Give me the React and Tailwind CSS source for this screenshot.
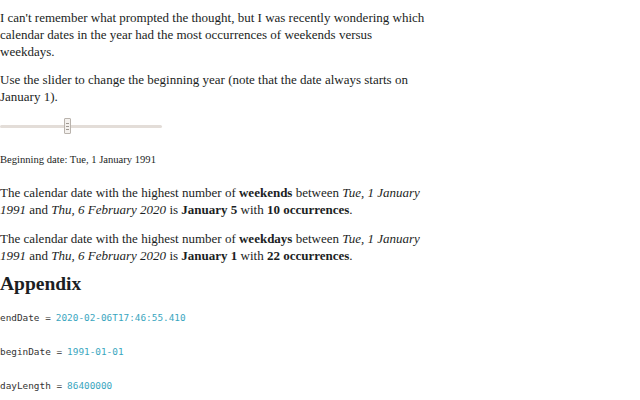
import React from "react";

const serif = { fontFamily: '"Liberation Serif", "DejaVu Serif", serif' };

function Slider() {
  return (
    <div className="relative w-[162px] h-[16px] flex items-center">
      <div className="w-full h-[3px] bg-[#e3ddd8] rounded-full" />
      <div className="absolute left-[64px] top-0 w-[7px] h-[16px] bg-[#f4f1ee] border border-[#b9b3ad] rounded-[1px] flex flex-col items-center justify-center gap-[2px]">
        <div className="w-[3px] h-px bg-[#a09a94]" />
        <div className="w-[3px] h-px bg-[#a09a94]" />
        <div className="w-[3px] h-px bg-[#a09a94]" />
      </div>
    </div>
  );
}

function Cell({ name, value }) {
  return (
    <div className="font-['DejaVu_Sans_Mono',monospace] text-[9.4px] text-[#333] h-[34px] flex items-center">
      {name} = <span className="ml-[5px] text-[#3aa6c0]">{value}</span>
    </div>
  );
}

export default function App() {
  return (
    <div className="w-[640px] h-[400px] overflow-hidden bg-white text-[#1b1e23]" style={serif}>
      <div className="w-[426px] text-[13px] leading-[17px]">
        <p className="pt-[9px]">
          I can't remember what prompted the thought, but I was recently wondering which calendar dates in the year had the most occurrences of weekends versus weekdays.
        </p>
        <p className="mt-[11px]">
          Use the slider to change the beginning year (note that the date always starts on January 1).
        </p>
        <div className="mt-[13px]">
          <Slider />
        </div>
        <div className="mt-[19px] text-[10.6px] leading-[14px]">Beginning date: Tue, 1 January 1991</div>
        <p className="mt-[17px]">
          The calendar date with the highest number of <b>weekends</b> between <i>Tue, 1 January 1991</i> and <i>Thu, 6 February 2020</i> is <b>January 5</b> with <b>10 occurrences</b>.
        </p>
        <p className="mt-[12px]">
          The calendar date with the highest number of <b>weekdays</b> between <i>Tue, 1 January 1991</i> and <i>Thu, 6 February 2020</i> is <b>January 1</b> with <b>22 occurrences</b>.
        </p>
        <h2 className="mt-[8px] text-[19.5px] leading-[24px] font-bold">Appendix</h2>
        <div className="mt-[4px]">
          <Cell name="endDate" value="2020-02-06T17:46:55.410" />
          <Cell name="beginDate" value="1991-01-01" />
          <Cell name="dayLength" value="86400000" />
        </div>
      </div>
    </div>
  );
}
